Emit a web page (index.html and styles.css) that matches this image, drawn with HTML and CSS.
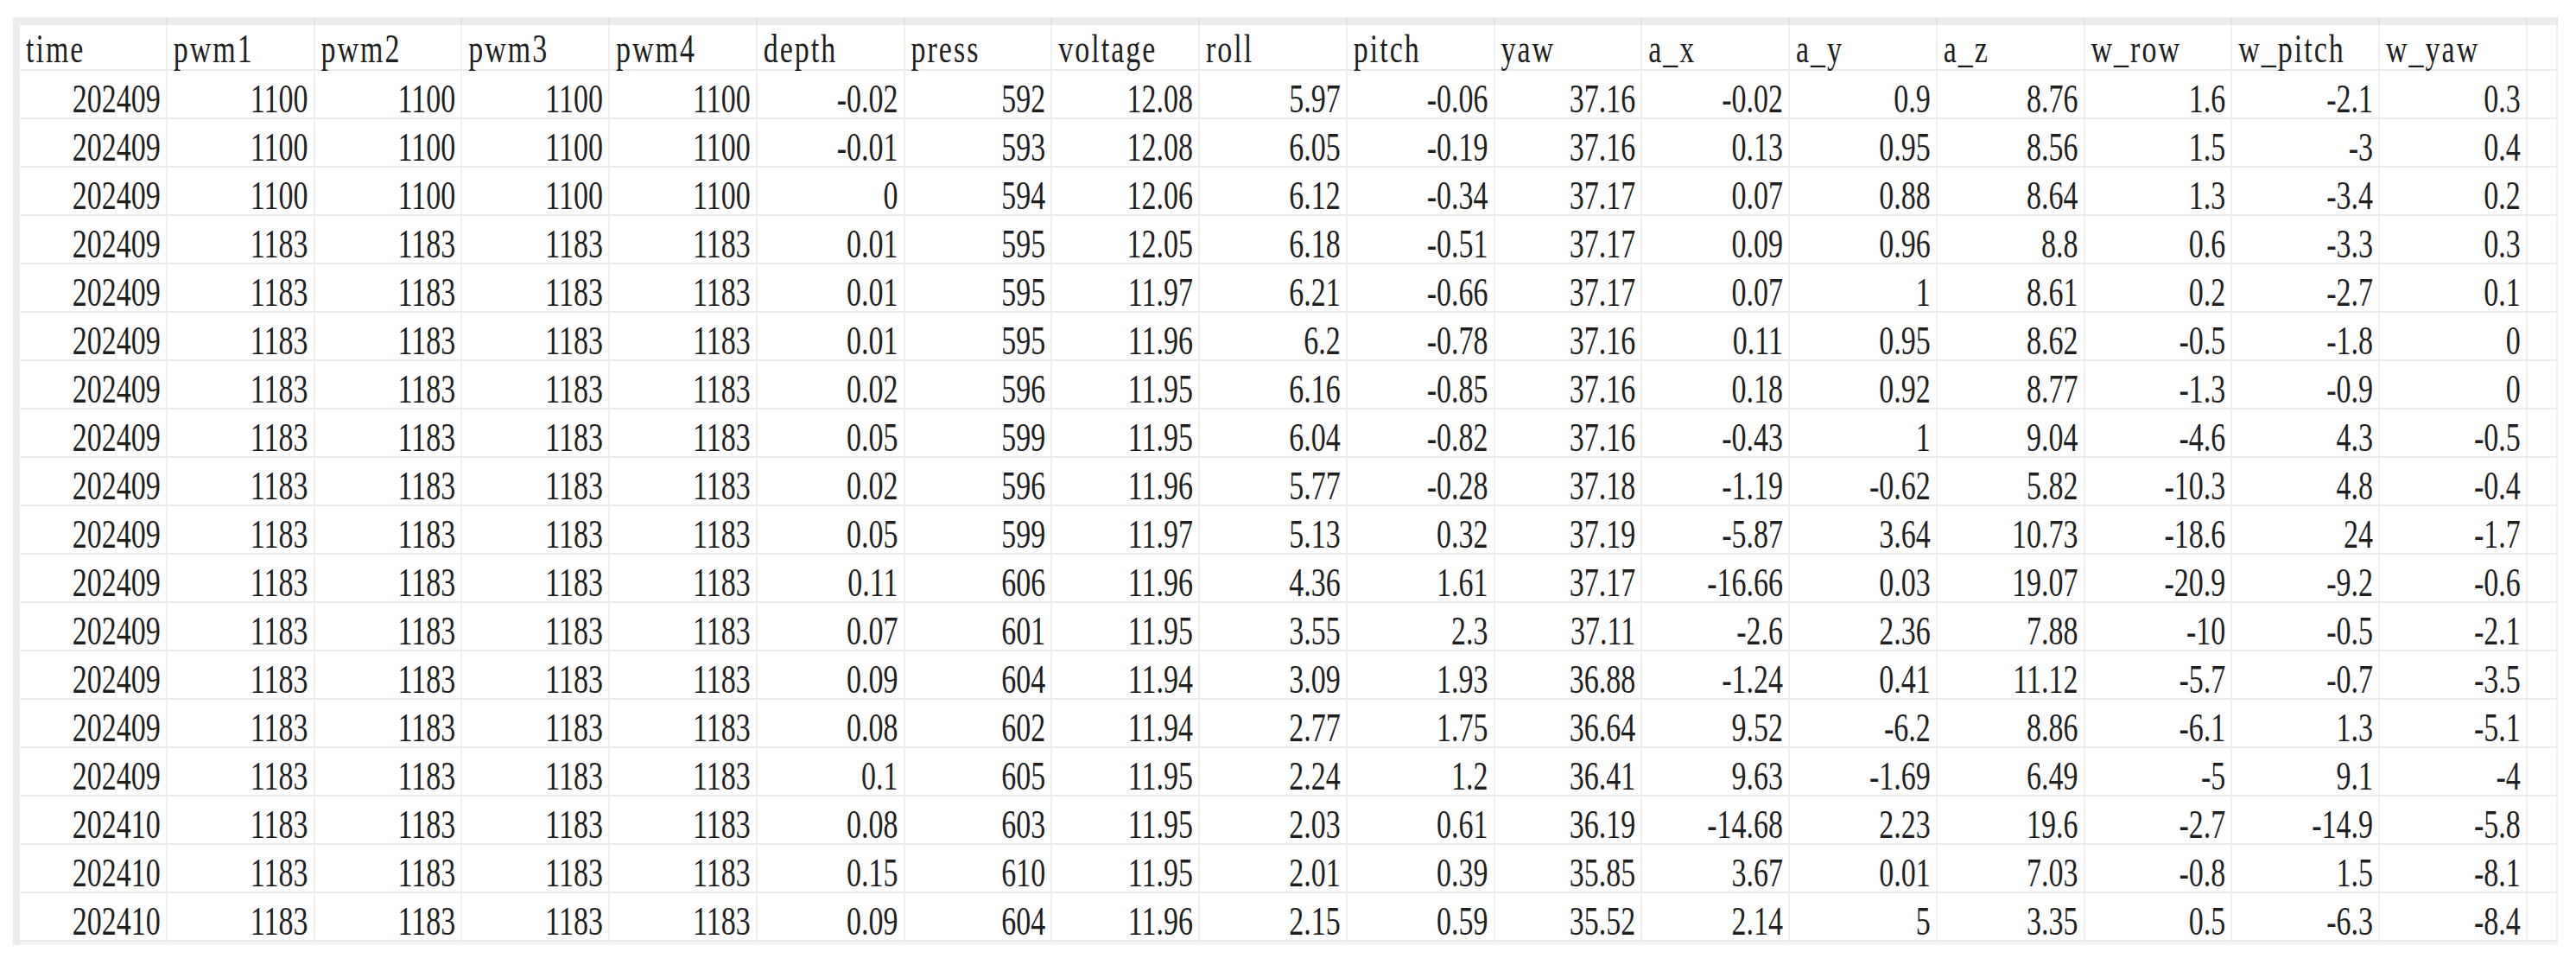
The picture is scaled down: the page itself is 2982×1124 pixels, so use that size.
FILE: index.html
```html
<!DOCTYPE html>
<html lang="en">
<head>
<meta charset="utf-8">
<title>data sheet</title>
<link rel="stylesheet" href="styles.css">
</head>
<body>
<div class="sheet">
  <div class="row band"><div class="c corner"></div><div class="c"></div><div class="c"></div><div class="c"></div><div class="c"></div><div class="c"></div><div class="c"></div><div class="c"></div><div class="c"></div><div class="c"></div><div class="c"></div><div class="c"></div><div class="c"></div><div class="c"></div><div class="c"></div><div class="c"></div><div class="c"></div><div class="c"></div><div class="c"></div></div>
  <div class="row head"><div class="c side"></div><div class="c"><span>time</span></div><div class="c"><span>pwm1</span></div><div class="c"><span>pwm2</span></div><div class="c"><span>pwm3</span></div><div class="c"><span>pwm4</span></div><div class="c"><span>depth</span></div><div class="c"><span>press</span></div><div class="c"><span>voltage</span></div><div class="c"><span>roll</span></div><div class="c"><span>pitch</span></div><div class="c"><span>yaw</span></div><div class="c"><span>a_x</span></div><div class="c"><span>a_y</span></div><div class="c"><span>a_z</span></div><div class="c"><span>w_row</span></div><div class="c"><span>w_pitch</span></div><div class="c"><span>w_yaw</span></div><div class="c"></div></div>
  <div class="row"><div class="c side"></div><div class="c"><span>202409</span></div><div class="c"><span>1100</span></div><div class="c"><span>1100</span></div><div class="c"><span>1100</span></div><div class="c"><span>1100</span></div><div class="c"><span>-0.02</span></div><div class="c"><span>592</span></div><div class="c"><span>12.08</span></div><div class="c"><span>5.97</span></div><div class="c"><span>-0.06</span></div><div class="c"><span>37.16</span></div><div class="c"><span>-0.02</span></div><div class="c"><span>0.9</span></div><div class="c"><span>8.76</span></div><div class="c"><span>1.6</span></div><div class="c"><span>-2.1</span></div><div class="c"><span>0.3</span></div><div class="c"></div></div>
  <div class="row"><div class="c side"></div><div class="c"><span>202409</span></div><div class="c"><span>1100</span></div><div class="c"><span>1100</span></div><div class="c"><span>1100</span></div><div class="c"><span>1100</span></div><div class="c"><span>-0.01</span></div><div class="c"><span>593</span></div><div class="c"><span>12.08</span></div><div class="c"><span>6.05</span></div><div class="c"><span>-0.19</span></div><div class="c"><span>37.16</span></div><div class="c"><span>0.13</span></div><div class="c"><span>0.95</span></div><div class="c"><span>8.56</span></div><div class="c"><span>1.5</span></div><div class="c"><span>-3</span></div><div class="c"><span>0.4</span></div><div class="c"></div></div>
  <div class="row"><div class="c side"></div><div class="c"><span>202409</span></div><div class="c"><span>1100</span></div><div class="c"><span>1100</span></div><div class="c"><span>1100</span></div><div class="c"><span>1100</span></div><div class="c"><span>0</span></div><div class="c"><span>594</span></div><div class="c"><span>12.06</span></div><div class="c"><span>6.12</span></div><div class="c"><span>-0.34</span></div><div class="c"><span>37.17</span></div><div class="c"><span>0.07</span></div><div class="c"><span>0.88</span></div><div class="c"><span>8.64</span></div><div class="c"><span>1.3</span></div><div class="c"><span>-3.4</span></div><div class="c"><span>0.2</span></div><div class="c"></div></div>
  <div class="row"><div class="c side"></div><div class="c"><span>202409</span></div><div class="c"><span>1183</span></div><div class="c"><span>1183</span></div><div class="c"><span>1183</span></div><div class="c"><span>1183</span></div><div class="c"><span>0.01</span></div><div class="c"><span>595</span></div><div class="c"><span>12.05</span></div><div class="c"><span>6.18</span></div><div class="c"><span>-0.51</span></div><div class="c"><span>37.17</span></div><div class="c"><span>0.09</span></div><div class="c"><span>0.96</span></div><div class="c"><span>8.8</span></div><div class="c"><span>0.6</span></div><div class="c"><span>-3.3</span></div><div class="c"><span>0.3</span></div><div class="c"></div></div>
  <div class="row"><div class="c side"></div><div class="c"><span>202409</span></div><div class="c"><span>1183</span></div><div class="c"><span>1183</span></div><div class="c"><span>1183</span></div><div class="c"><span>1183</span></div><div class="c"><span>0.01</span></div><div class="c"><span>595</span></div><div class="c"><span>11.97</span></div><div class="c"><span>6.21</span></div><div class="c"><span>-0.66</span></div><div class="c"><span>37.17</span></div><div class="c"><span>0.07</span></div><div class="c"><span>1</span></div><div class="c"><span>8.61</span></div><div class="c"><span>0.2</span></div><div class="c"><span>-2.7</span></div><div class="c"><span>0.1</span></div><div class="c"></div></div>
  <div class="row"><div class="c side"></div><div class="c"><span>202409</span></div><div class="c"><span>1183</span></div><div class="c"><span>1183</span></div><div class="c"><span>1183</span></div><div class="c"><span>1183</span></div><div class="c"><span>0.01</span></div><div class="c"><span>595</span></div><div class="c"><span>11.96</span></div><div class="c"><span>6.2</span></div><div class="c"><span>-0.78</span></div><div class="c"><span>37.16</span></div><div class="c"><span>0.11</span></div><div class="c"><span>0.95</span></div><div class="c"><span>8.62</span></div><div class="c"><span>-0.5</span></div><div class="c"><span>-1.8</span></div><div class="c"><span>0</span></div><div class="c"></div></div>
  <div class="row"><div class="c side"></div><div class="c"><span>202409</span></div><div class="c"><span>1183</span></div><div class="c"><span>1183</span></div><div class="c"><span>1183</span></div><div class="c"><span>1183</span></div><div class="c"><span>0.02</span></div><div class="c"><span>596</span></div><div class="c"><span>11.95</span></div><div class="c"><span>6.16</span></div><div class="c"><span>-0.85</span></div><div class="c"><span>37.16</span></div><div class="c"><span>0.18</span></div><div class="c"><span>0.92</span></div><div class="c"><span>8.77</span></div><div class="c"><span>-1.3</span></div><div class="c"><span>-0.9</span></div><div class="c"><span>0</span></div><div class="c"></div></div>
  <div class="row"><div class="c side"></div><div class="c"><span>202409</span></div><div class="c"><span>1183</span></div><div class="c"><span>1183</span></div><div class="c"><span>1183</span></div><div class="c"><span>1183</span></div><div class="c"><span>0.05</span></div><div class="c"><span>599</span></div><div class="c"><span>11.95</span></div><div class="c"><span>6.04</span></div><div class="c"><span>-0.82</span></div><div class="c"><span>37.16</span></div><div class="c"><span>-0.43</span></div><div class="c"><span>1</span></div><div class="c"><span>9.04</span></div><div class="c"><span>-4.6</span></div><div class="c"><span>4.3</span></div><div class="c"><span>-0.5</span></div><div class="c"></div></div>
  <div class="row"><div class="c side"></div><div class="c"><span>202409</span></div><div class="c"><span>1183</span></div><div class="c"><span>1183</span></div><div class="c"><span>1183</span></div><div class="c"><span>1183</span></div><div class="c"><span>0.02</span></div><div class="c"><span>596</span></div><div class="c"><span>11.96</span></div><div class="c"><span>5.77</span></div><div class="c"><span>-0.28</span></div><div class="c"><span>37.18</span></div><div class="c"><span>-1.19</span></div><div class="c"><span>-0.62</span></div><div class="c"><span>5.82</span></div><div class="c"><span>-10.3</span></div><div class="c"><span>4.8</span></div><div class="c"><span>-0.4</span></div><div class="c"></div></div>
  <div class="row"><div class="c side"></div><div class="c"><span>202409</span></div><div class="c"><span>1183</span></div><div class="c"><span>1183</span></div><div class="c"><span>1183</span></div><div class="c"><span>1183</span></div><div class="c"><span>0.05</span></div><div class="c"><span>599</span></div><div class="c"><span>11.97</span></div><div class="c"><span>5.13</span></div><div class="c"><span>0.32</span></div><div class="c"><span>37.19</span></div><div class="c"><span>-5.87</span></div><div class="c"><span>3.64</span></div><div class="c"><span>10.73</span></div><div class="c"><span>-18.6</span></div><div class="c"><span>24</span></div><div class="c"><span>-1.7</span></div><div class="c"></div></div>
  <div class="row"><div class="c side"></div><div class="c"><span>202409</span></div><div class="c"><span>1183</span></div><div class="c"><span>1183</span></div><div class="c"><span>1183</span></div><div class="c"><span>1183</span></div><div class="c"><span>0.11</span></div><div class="c"><span>606</span></div><div class="c"><span>11.96</span></div><div class="c"><span>4.36</span></div><div class="c"><span>1.61</span></div><div class="c"><span>37.17</span></div><div class="c"><span>-16.66</span></div><div class="c"><span>0.03</span></div><div class="c"><span>19.07</span></div><div class="c"><span>-20.9</span></div><div class="c"><span>-9.2</span></div><div class="c"><span>-0.6</span></div><div class="c"></div></div>
  <div class="row"><div class="c side"></div><div class="c"><span>202409</span></div><div class="c"><span>1183</span></div><div class="c"><span>1183</span></div><div class="c"><span>1183</span></div><div class="c"><span>1183</span></div><div class="c"><span>0.07</span></div><div class="c"><span>601</span></div><div class="c"><span>11.95</span></div><div class="c"><span>3.55</span></div><div class="c"><span>2.3</span></div><div class="c"><span>37.11</span></div><div class="c"><span>-2.6</span></div><div class="c"><span>2.36</span></div><div class="c"><span>7.88</span></div><div class="c"><span>-10</span></div><div class="c"><span>-0.5</span></div><div class="c"><span>-2.1</span></div><div class="c"></div></div>
  <div class="row"><div class="c side"></div><div class="c"><span>202409</span></div><div class="c"><span>1183</span></div><div class="c"><span>1183</span></div><div class="c"><span>1183</span></div><div class="c"><span>1183</span></div><div class="c"><span>0.09</span></div><div class="c"><span>604</span></div><div class="c"><span>11.94</span></div><div class="c"><span>3.09</span></div><div class="c"><span>1.93</span></div><div class="c"><span>36.88</span></div><div class="c"><span>-1.24</span></div><div class="c"><span>0.41</span></div><div class="c"><span>11.12</span></div><div class="c"><span>-5.7</span></div><div class="c"><span>-0.7</span></div><div class="c"><span>-3.5</span></div><div class="c"></div></div>
  <div class="row"><div class="c side"></div><div class="c"><span>202409</span></div><div class="c"><span>1183</span></div><div class="c"><span>1183</span></div><div class="c"><span>1183</span></div><div class="c"><span>1183</span></div><div class="c"><span>0.08</span></div><div class="c"><span>602</span></div><div class="c"><span>11.94</span></div><div class="c"><span>2.77</span></div><div class="c"><span>1.75</span></div><div class="c"><span>36.64</span></div><div class="c"><span>9.52</span></div><div class="c"><span>-6.2</span></div><div class="c"><span>8.86</span></div><div class="c"><span>-6.1</span></div><div class="c"><span>1.3</span></div><div class="c"><span>-5.1</span></div><div class="c"></div></div>
  <div class="row"><div class="c side"></div><div class="c"><span>202409</span></div><div class="c"><span>1183</span></div><div class="c"><span>1183</span></div><div class="c"><span>1183</span></div><div class="c"><span>1183</span></div><div class="c"><span>0.1</span></div><div class="c"><span>605</span></div><div class="c"><span>11.95</span></div><div class="c"><span>2.24</span></div><div class="c"><span>1.2</span></div><div class="c"><span>36.41</span></div><div class="c"><span>9.63</span></div><div class="c"><span>-1.69</span></div><div class="c"><span>6.49</span></div><div class="c"><span>-5</span></div><div class="c"><span>9.1</span></div><div class="c"><span>-4</span></div><div class="c"></div></div>
  <div class="row"><div class="c side"></div><div class="c"><span>202410</span></div><div class="c"><span>1183</span></div><div class="c"><span>1183</span></div><div class="c"><span>1183</span></div><div class="c"><span>1183</span></div><div class="c"><span>0.08</span></div><div class="c"><span>603</span></div><div class="c"><span>11.95</span></div><div class="c"><span>2.03</span></div><div class="c"><span>0.61</span></div><div class="c"><span>36.19</span></div><div class="c"><span>-14.68</span></div><div class="c"><span>2.23</span></div><div class="c"><span>19.6</span></div><div class="c"><span>-2.7</span></div><div class="c"><span>-14.9</span></div><div class="c"><span>-5.8</span></div><div class="c"></div></div>
  <div class="row"><div class="c side"></div><div class="c"><span>202410</span></div><div class="c"><span>1183</span></div><div class="c"><span>1183</span></div><div class="c"><span>1183</span></div><div class="c"><span>1183</span></div><div class="c"><span>0.15</span></div><div class="c"><span>610</span></div><div class="c"><span>11.95</span></div><div class="c"><span>2.01</span></div><div class="c"><span>0.39</span></div><div class="c"><span>35.85</span></div><div class="c"><span>3.67</span></div><div class="c"><span>0.01</span></div><div class="c"><span>7.03</span></div><div class="c"><span>-0.8</span></div><div class="c"><span>1.5</span></div><div class="c"><span>-8.1</span></div><div class="c"></div></div>
  <div class="row"><div class="c side"></div><div class="c"><span>202410</span></div><div class="c"><span>1183</span></div><div class="c"><span>1183</span></div><div class="c"><span>1183</span></div><div class="c"><span>1183</span></div><div class="c"><span>0.09</span></div><div class="c"><span>604</span></div><div class="c"><span>11.96</span></div><div class="c"><span>2.15</span></div><div class="c"><span>0.59</span></div><div class="c"><span>35.52</span></div><div class="c"><span>2.14</span></div><div class="c"><span>5</span></div><div class="c"><span>3.35</span></div><div class="c"><span>0.5</span></div><div class="c"><span>-6.3</span></div><div class="c"><span>-8.4</span></div><div class="c"></div></div>
  <div class="row foot"><div class="c side"></div><div class="c"></div><div class="c"></div><div class="c"></div><div class="c"></div><div class="c"></div><div class="c"></div><div class="c"></div><div class="c"></div><div class="c"></div><div class="c"></div><div class="c"></div><div class="c"></div><div class="c"></div><div class="c"></div><div class="c"></div><div class="c"></div><div class="c"></div><div class="c"></div></div>
</div>
</body>
</html>
```

FILE: styles.css
```css
* { box-sizing: border-box; }

html, body {
  margin: 0;
  padding: 0;
  background: #ffffff;
}

body {
  width: 2982px;
  height: 1124px;
  overflow: hidden;
  font-family: "Liberation Serif", "DejaVu Serif", serif;
  color: #1f1f1f;
}

.sheet {
  margin: 20px 0 0 15px;
  width: 2945px;
  display: flex;
  flex-direction: column;
}

.row {
  display: grid;
  grid-template-columns: 8px repeat(17, 170.75px) 35px;
  height: 56px;
}

.row.band {
  height: 9px;
  background: #ececec;
}

.row.head {
  height: 53px;
}

.row.foot {
  height: 4px;
}

.c {
  display: flex;
  align-items: flex-end;
  justify-content: flex-end;
  padding: 0 6px 0 0;
  border-right: 2px solid #f0f0f0;
  border-bottom: 2px solid #ebebeb;
  overflow: visible;
  white-space: nowrap;
}

.band .c {
  border-right: 2px solid #e4e4e4;
  border-bottom: none;
}

.c.side,
.band .c.corner {
  background: #ececec;
  border-right: none;
  padding: 0;
}

.foot .c {
  border-bottom: none;
  background: #f6f6f6;
}

.foot .c.side {
  background: #ececec;
}

.head .c {
  justify-content: flex-start;
  padding: 0 0 2px 7px;
}

.c span {
  display: inline-block;
  font-size: 34px;
  line-height: 34px;
  transform: scaleY(1.36);
  transform-origin: 50% 28.5px;
}

.head .c span {
  letter-spacing: 2px;
}
```
